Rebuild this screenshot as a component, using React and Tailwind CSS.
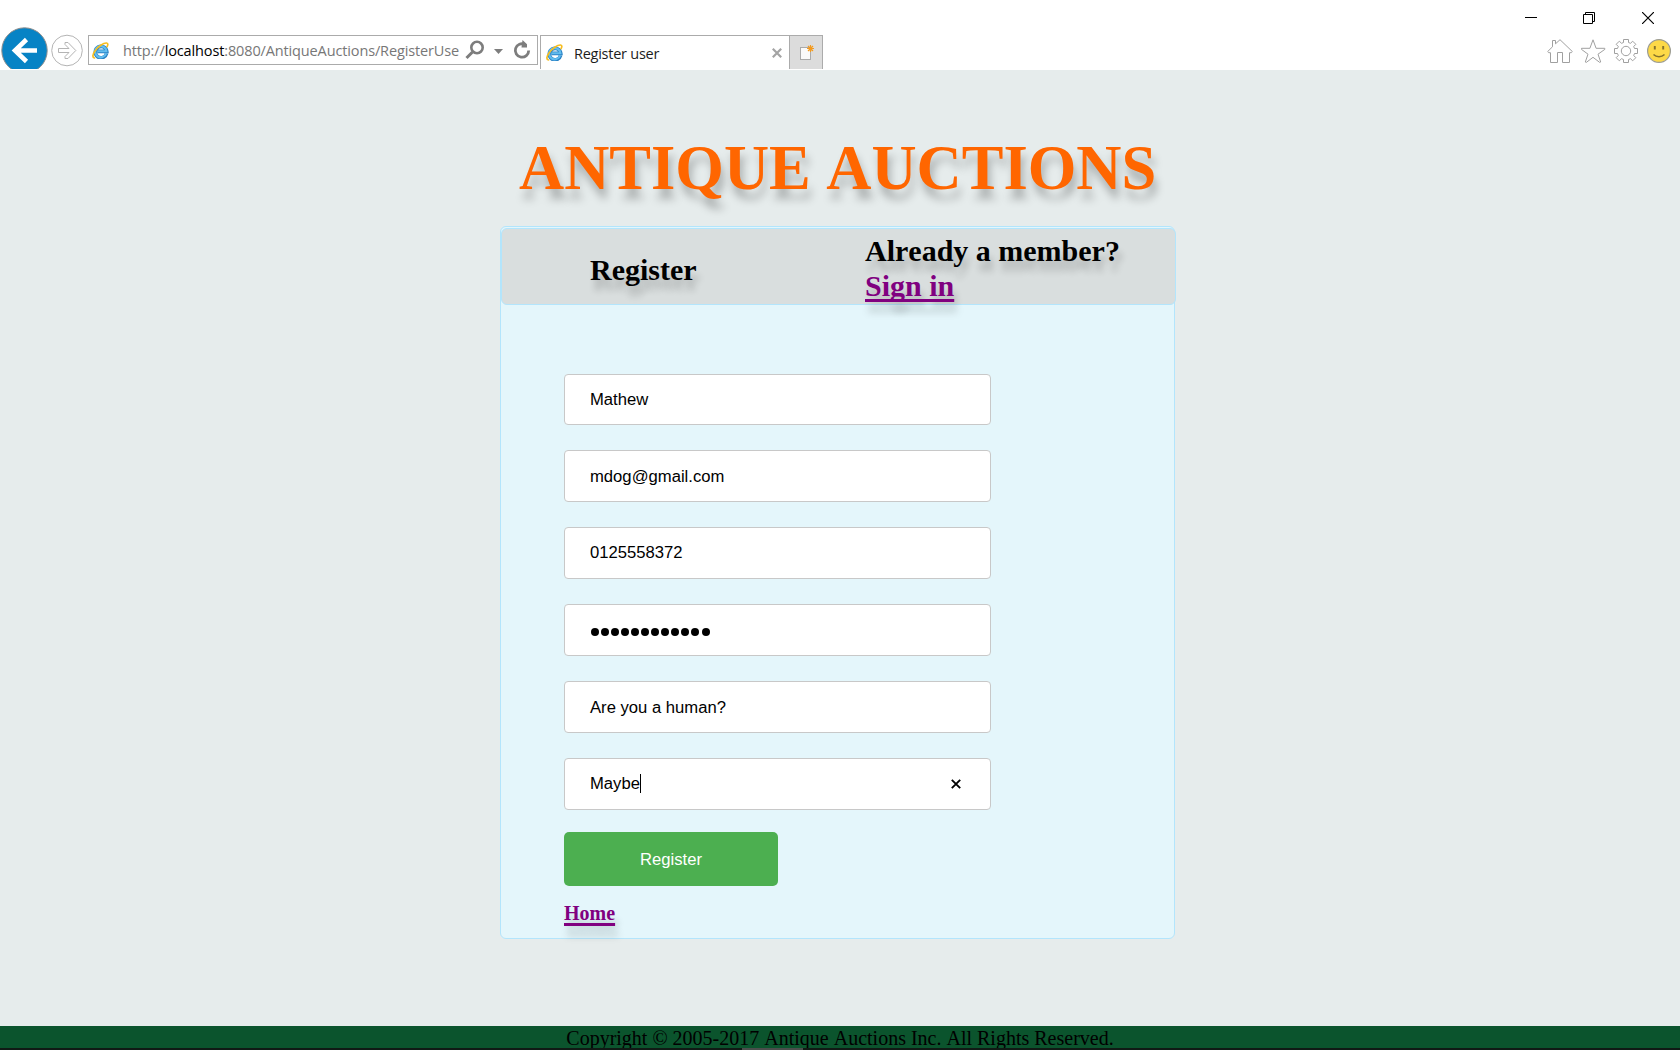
function IeLogo({ className }) {
  return (
    <svg className={className} width="17" height="17" viewBox="0 0 17 17" fill="none">
      <path d="M14.600 11.400A5.700 5.700 0 1 1 14.700 9.300H5.500" stroke="#2b83c6" strokeWidth="3.700" />
      <path d="M14.200 11.300A5.600 5.600 0 1 1 14.400 9.200H5.500" stroke="#62bdee" strokeWidth="2.100" />
      <path d="M2.500 16C.2 15.800 .4 12.500 3 8.900C6 4.600 11.500 .8 14.600 1C16.300 1.200 16 3 15.100 4.700" stroke="#f7bd1f" strokeWidth="1.700" strokeLinecap="round" />
    </svg>
  );
}

function BrowserBar() {
  return (
    <header className="flex h-[70px] w-full items-start overflow-hidden bg-white font-['Open_Sans',sans-serif]">
      <div className="mt-[27px] ml-[1px] h-[42px] w-[47px] shrink-0 overflow-hidden">
        <svg width="47" height="47" viewBox="0 0 47 47" fill="none">
          <circle cx="23.500" cy="23.500" r="22.700" fill="#0783c5" stroke="#8d8d8d" />
          <path d="M36 23.500H14M25.500 12.500L14 23.500L25.500 34.500" stroke="#fff" strokeWidth="4.600" />
        </svg>
      </div>
      <svg className="mt-[34px] ml-[3px] shrink-0" width="32" height="33" viewBox="0 0 32 33" fill="none">
        <circle cx="16" cy="16.500" r="15.300" stroke="#b4b4b4" />
        <path d="M7.500 14.500H18L14 10.500V8.500H17L24.800 16.500L17 24.500H14V22.500L18 18.500H7.500Z" stroke="#b4b4b4" />
      </svg>
      <div className="mt-[35px] ml-[5px] flex h-[30px] w-[450px] shrink-0 items-center border border-[#ababab] bg-white">
        <IeLogo className="ml-[3px] shrink-0" />
        <span className="mt-[2px] ml-[14px] w-[338px] shrink-0 text-[14.500px] leading-[26px] tracking-[-0.130px] whitespace-nowrap text-[#777]">
          http://<span className="text-black">localhost</span>:8080/AntiqueAuctions/RegisterUse
        </span>
        <svg className="ml-[4px] shrink-0" width="20" height="20" viewBox="0 0 20 20" fill="none" stroke="#7d7d7d">
          <circle cx="12" cy="7.500" r="5.700" strokeWidth="2.600" />
          <path d="M7.500 12L1.500 18" strokeWidth="3" />
        </svg>
        <svg className="mt-[2px] ml-[9px] shrink-0" width="9" height="5" viewBox="0 0 9 5"><path d="M0 0H9L4.500 5Z" fill="#7d7d7d" /></svg>
        <svg className="ml-[10px] shrink-0" width="19" height="20" viewBox="0 0 19 20" fill="none">
          <path d="M12 4.500A6.700 6.700 0 1 0 15.700 10.500" stroke="#7d7d7d" strokeWidth="2.800" />
          <path d="M9.500 0L14 4.200V7.500H8.500Z" fill="#7d7d7d" />
        </svg>
      </div>
      <div className="mt-[35px] ml-[2px] flex h-[34px] w-[250px] shrink-0 items-center border border-b-0 border-[#ababab]">
        <IeLogo className="ml-[5px] shrink-0" />
        <span className="mt-[2px] ml-[11px] text-[14.500px] leading-[26px] tracking-[-0.250px] whitespace-nowrap text-[#1c1c1c]">Register user</span>
        <svg className="mr-[7px] ml-auto shrink-0" width="10" height="10" viewBox="0 0 10 10"><path d="M.8.8L9.200 9.200M9.200.8L.8 9.200" stroke="#a4a4a4" strokeWidth="2.200" /></svg>
      </div>
      <div className="mt-[35px] flex h-[34px] w-[33px] shrink-0 justify-center border border-b-0 border-l-0 border-[#ababab] bg-[#dcdcdc]">
        <svg className="mt-[8px] ml-[1px]" width="16" height="18" viewBox="0 0 16 18" fill="none">
          <rect x="1.500" y="3.500" width="10" height="12" fill="#fafafa" stroke="#aaa" />
          <path d="M11.500 1V8M8 4.500H15M9 2L14 7M14 2L9 7" stroke="#f39a1e" strokeWidth="1.200" />
        </svg>
      </div>
      <div className="ml-auto flex w-[155px] shrink-0 flex-col">
        <div className="flex h-[39px] items-start pt-[12px]">
          <svg width="12" height="12" viewBox="0 0 12 12"><path d="M0 5.500H12" stroke="#000" /></svg>
          <svg width="12" height="12" viewBox="0 0 12 12" className="ml-[46px]" fill="none" stroke="#000"><path d="M.5 2.500H9.500V11.500H.5ZM2.500 2.500V.5H11.500V9.500H9.500" /></svg>
          <svg width="12" height="12" viewBox="0 0 12 12" className="ml-[47px]"><path d="M0 0L12 12M12 0L0 12" stroke="#000" strokeWidth="1.200" /></svg>
        </div>
        <div className="flex pl-[22px]">
          <svg width="26" height="24" viewBox="0 0 26 24" fill="none" stroke="#a0a0a0" strokeLinejoin="round">
            <path d="M.7 12.500L5.500 7.800V1.500H8.500V4.800L13 .7L25.300 12.500L24.300 13.700H22.500V23.500H15.500V13.500H10.500V23.500H3.500V13.700H1.700Z" />
          </svg>
          <svg className="ml-[8px]" width="25" height="24" viewBox="0 0 25 24" fill="none" stroke="#a0a0a0" strokeLinejoin="round">
            <path d="M12 .8L15.100 9.300H23.800V10.400L17 15.200L19.700 23L18.800 23.500L12 18.300L5.200 23.500L4.300 23L7 15.200L.5 10.400V9.300H8.900Z" />
          </svg>
          <svg className="ml-[8px]" width="24" height="24" viewBox="0 0 24 24" fill="none" stroke="#a0a0a0" strokeLinejoin="round">
            <path d="M9.500 .5H14.500V3.500L16.500 4.300L18.700 2.200L21.800 5.300L19.700 7.500L20.500 9.500H23.500V14.500H20.500L19.700 16.500L21.800 18.700L18.700 21.800L16.500 19.700L14.500 20.500V23.500H9.500V20.500L7.500 19.700L5.300 21.800L2.200 18.700L4.300 16.500L3.500 14.500H.5V9.500H3.500L4.300 7.500L2.200 5.300L5.300 2.200L7.500 4.300L9.500 3.500Z" />
            <circle cx="12" cy="12" r="4.700" />
          </svg>
          <svg className="ml-[9px]" width="24" height="24" viewBox="0 0 24 24" fill="none">
            <circle cx="12" cy="12" r="11.400" fill="#fdd947" stroke="#9c9c94" strokeWidth="1.200" />
            <path d="M7.800 7V10.500M16.200 7V10.500" stroke="#85722b" strokeWidth="1.900" />
            <path d="M6.500 15.500C9.500 18.500 14.500 18.500 17.500 15.500" stroke="#85722b" strokeWidth="1.500" />
          </svg>
        </div>
      </div>
    </header>
  );
}

function Field({ className, children }) {
  return (
    <div className={`flex w-[427px] items-start rounded-[4px] border border-[#c8c8c8] bg-white pl-[25px] font-['Liberation_Sans',sans-serif] text-[16.650px] leading-[50px] text-black ${className}`}>
      {children}
    </div>
  );
}

export default function App() {
  return (
    <div className="flex h-[1050px] w-full flex-col overflow-hidden bg-[#e6ecec] font-['Liberation_Serif',serif] text-black [font-kerning:none]">
      <BrowserBar />
      <main className="flex h-[956px] flex-col pl-[500px]">
        <h1 className="mt-[62px] ml-[19px] h-[71px] text-[62.500px] leading-[72px] font-bold whitespace-nowrap text-[#ff6600] [text-shadow:3px_10px_8px_rgba(0,0,0,0.26)]">
          ANTIQUE AUCTIONS
        </h1>
        <section className="mt-[23px] flex h-[713px] w-[675px] flex-col rounded-[6px] border border-[#b3e5fc] bg-[#e4f6fb]">
          <div className="mt-px flex h-[77px] w-[675px] shrink-0 rounded-[6px] border border-[#b3e5fc] bg-[#d9dede] text-[30px] leading-[35px] font-bold [text-shadow:3px_10px_7px_rgba(0,0,0,0.2)]">
            <h2 className="mt-[23px] ml-[88px] w-[275px]">Register</h2>
            <div className="mt-[4px] whitespace-nowrap">
              <p>Already a member?</p>
              <a className="text-[#800080] underline decoration-[3px] underline-offset-[3px] [text-decoration-skip-ink:none]">Sign in</a>
            </div>
          </div>
          <form className="flex flex-col pt-[69px] pl-[63px]">
            <Field className="mb-[25px] h-[51px]">Mathew</Field>
            <Field className="mb-[25px] h-[52px] pt-[1px]">mdog@gmail.com</Field>
            <Field className="mb-[25px] h-[52px]">0125558372</Field>
            <Field className="mb-[25px] h-[52px] gap-[2.050px] pt-[23px] pl-[26px]">
              {Array.from({ length: 12 }, (_, i) => (
                <span key={i} className="mt-[0.300px] size-[8px] shrink-0 rounded-full bg-black" />
              ))}
            </Field>
            <Field className="mb-[25px] h-[52px] pt-[1px]">Are you a human?</Field>
            <Field className="h-[52px]">
              Maybe
              <span className="mt-[15px] h-[19px] w-px bg-black" />
              <svg className="mt-[20px] mr-[29px] ml-auto" width="10" height="10" viewBox="0 0 10 10"><path d="M.8.8L9.200 9.200M9.200.8L.8 9.200" stroke="#000" strokeWidth="1.900" /></svg>
            </Field>
            <button type="button" className="mt-[22px] h-[54px] w-[214px] rounded-[5px] bg-[#4caf50] pt-[2px] font-['Liberation_Sans',sans-serif] text-[16.650px] leading-[52px] text-white">
              Register
            </button>
            <a className="mt-[16px] w-fit text-[20px] leading-[23px] font-bold text-[#800080] underline decoration-[3px] underline-offset-[3px] [text-decoration-skip-ink:none] [text-shadow:3px_10px_7px_rgba(0,0,0,0.2)]">Home</a>
          </form>
        </section>
      </main>
      <footer className="flex h-[24px] flex-col bg-[#0b542d]">
        <p className="h-[22px] text-center text-[20px] leading-[25px] whitespace-nowrap">Copyright © 2005-2017 Antique Auctions Inc. All Rights Reserved.</p>
        <div className="flex h-[2px] bg-[#101a15]">
          <span className="ml-[742px] w-[61px] bg-[#4a4f4c]" />
        </div>
      </footer>
    </div>
  );
}
